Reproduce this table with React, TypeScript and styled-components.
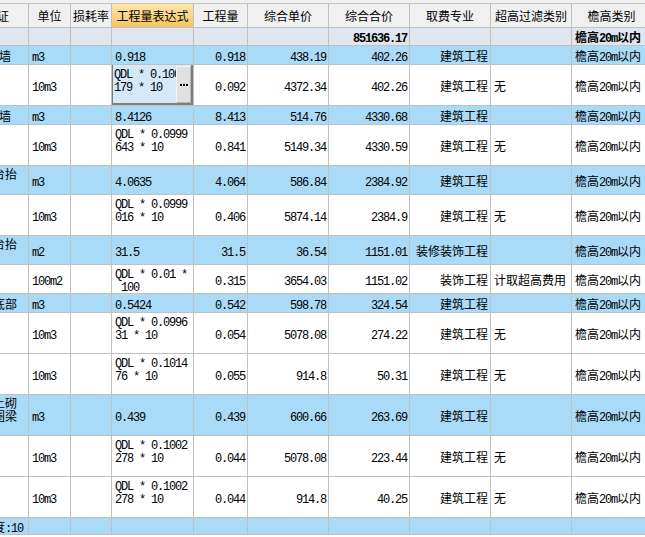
import React from "react";
import styled, { createGlobalStyle, css } from "styled-components";

const GlobalStyle = createGlobalStyle`
  html, body { margin: 0; padding: 0; background: #ffffff; overflow: hidden; }
  #root { width: 645px; height: 537px; overflow: hidden; }
`;

const COLS = "29px 42px 41px 82px 54px 81px 81px 81px 81px 80px";
const LINE = "#c0c0c0";

type Kind = "sum" | "blue" | "white";
const BG: Record<Kind, string> = {
  sum: "#dfe6ef",
  blue: "#a9dbf8",
  white: "#ffffff",
};

const Sheet = styled.div`
  width: 652px;
  font-family: "Noto Sans CJK SC", "Noto Sans", sans-serif;
  font-size: 12px;
  color: #000;
`;

const TopStrip = styled.div`
  height: 3px;
  background: #f0f0f0;
  border-bottom: 1px solid #c4c4c4;
`;

const HeaderRow = styled.div`
  display: grid;
  grid-template-columns: ${COLS};
  height: 24px;
  box-sizing: border-box;
  border-bottom: 1px solid ${LINE};
  background: #f0f0f0;
`;

const HeadCell = styled.div<{ $active?: boolean; $trail?: number }>`
  box-sizing: border-box;
  border-right: 1px solid ${LINE};
  display: flex;
  align-items: center;
  justify-content: ${(p) => (p.$trail !== undefined ? "flex-end" : "center")};
  padding-right: ${(p) => (p.$trail !== undefined ? `${p.$trail}px` : "0")};
  overflow: hidden;
  white-space: nowrap;
  font-size: 12px;
  line-height: 13px;
  ${(p) =>
    p.$active &&
    css`
      background: linear-gradient(#fde7ad, #f6c45f);
    `}
`;

const Row = styled.div<{ $h: number; $kind: Kind }>`
  display: grid;
  grid-template-columns: ${COLS};
  height: ${(p) => p.$h}px;
  box-sizing: border-box;
  border-bottom: 1px solid ${LINE};
  background: ${(p) => BG[p.$kind]};
`;

type Align = "left" | "right";
const Cell = styled.div<{ $align?: Align; $top?: boolean; $trail?: number; $bold?: boolean }>`
  position: relative;
  box-sizing: border-box;
  border-right: 1px solid ${LINE};
  display: flex;
  flex-direction: column;
  justify-content: ${(p) => (p.$top ? "flex-start" : "center")};
  align-items: ${(p) => (p.$align === "right" ? "flex-end" : "flex-start")};
  padding: ${(p) => (p.$top ? "1px" : "0")} ${(p) => (p.$trail !== undefined ? p.$trail : p.$align === "right" ? 2 : 3)}px 0 3px;
  overflow: hidden;
  white-space: pre;
  line-height: 13px;
  font-weight: ${(p) => (p.$bold ? 700 : 400)};
`;

const Line = styled.div`
  display: block;
  height: 13px;
  flex: none;
  white-space: pre;
  line-height: 13px;
`;

const Latin = styled.span`
  font-family: "Liberation Mono", "DejaVu Sans Mono", monospace;
  font-size: 12px;
  letter-spacing: -1.2px;
  white-space: pre;
`;

const Han = styled.span`
  white-space: pre;
`;

const Editor = styled.div`
  position: absolute;
  left: -2px;
  top: -3px;
  right: -1px;
  bottom: -1px;
  border: 3px solid #7d7d7d;
  background: #d5e8f8;
  padding: 1px 0 0 1px;
  box-sizing: border-box;
  overflow: hidden;
  z-index: 2;
`;

const EditText = styled.div`
  width: 62px;
  overflow: hidden;
  white-space: pre;
  line-height: 13px;
`;

const DotsButton = styled.div`
  position: absolute;
  right: 0;
  top: 1px;
  bottom: 0;
  width: 15px;
  box-sizing: border-box;
  background: #e0e0e0;
  border: 1px solid #b4b4b4;
  border-top-color: #f4f4f4;
  border-left-color: #f4f4f4;
  display: flex;
  align-items: center;
  justify-content: center;
  gap: 1px;
`;

const Dot = styled.span`
  width: 2px;
  height: 2px;
  background: #000;
`;

function Mixed({ text }: { text: string }) {
  const parts = text.match(/[\x00-\x7f]+|[^\x00-\x7f]+/g) || [];
  return (
    <>
      {parts.map((p, i) =>
        /^[\x00-\x7f]+$/.test(p) ? <Latin key={i}>{p}</Latin> : <Han key={i}>{p}</Han>
      )}
    </>
  );
}

type RowData = {
  kind: Kind;
  h: number;
  name?: string[];
  nameTrail?: number;
  nameTop?: boolean;
  unit?: string;
  expr?: string[];
  editing?: boolean;
  qty?: string;
  price?: string;
  total?: string;
  fee?: string;
  filter?: string;
  eave?: string;
  bold?: boolean;
};

const EAVE = "檐高20m以内";

const rows: RowData[] = [
  { kind: "sum", h: 18, total: "851636.17", eave: EAVE, bold: true },
  { kind: "blue", h: 19, name: ["墙"], nameTrail: 17, unit: "m3", expr: ["0.918"], qty: "0.918", price: "438.19", total: "402.26", fee: "建筑工程", eave: EAVE },
  { kind: "white", h: 41, unit: "10m3", expr: ["QDL * 0.1002", "179 * 10"], editing: true, qty: "0.092", price: "4372.34", total: "402.26", fee: "建筑工程", filter: "无", eave: EAVE },
  { kind: "blue", h: 19, name: ["墙"], nameTrail: 17, unit: "m3", expr: ["8.4126"], qty: "8.413", price: "514.76", total: "4330.68", fee: "建筑工程", eave: EAVE },
  { kind: "white", h: 41, unit: "10m3", expr: ["QDL * 0.0999", "643 * 10"], qty: "0.841", price: "5149.34", total: "4330.59", fee: "建筑工程", filter: "无", eave: EAVE },
  { kind: "blue", h: 29, name: ["台抬"], nameTrail: 11, nameTop: true, unit: "m3", expr: ["4.0635"], qty: "4.064", price: "586.84", total: "2384.92", fee: "建筑工程", eave: EAVE },
  { kind: "white", h: 41, unit: "10m3", expr: ["QDL * 0.0999", "016 * 10"], qty: "0.406", price: "5874.14", total: "2384.9", fee: "建筑工程", filter: "无", eave: EAVE },
  { kind: "blue", h: 29, name: ["台抬"], nameTrail: 11, nameTop: true, unit: "m2", expr: ["31.5"], qty: "31.5", price: "36.54", total: "1151.01", fee: "装修装饰工程", eave: EAVE },
  { kind: "white", h: 29, unit: "100m2", expr: ["QDL * 0.01 *", " 100"], qty: "0.315", price: "3654.03", total: "1151.02", fee: "装饰工程", filter: "计取超高费用", eave: EAVE },
  { kind: "blue", h: 19, name: ["底部"], nameTrail: 11, unit: "m3", expr: ["0.5424"], qty: "0.542", price: "598.78", total: "324.54", fee: "建筑工程", eave: EAVE },
  { kind: "white", h: 41, unit: "10m3", expr: ["QDL * 0.0996", "31 * 10"], qty: "0.054", price: "5078.08", total: "274.22", fee: "建筑工程", filter: "无", eave: EAVE },
  { kind: "white", h: 41, unit: "10m3", expr: ["QDL * 0.1014", "76 * 10"], qty: "0.055", price: "914.8", total: "50.31", fee: "建筑工程", filter: "无", eave: EAVE },
  { kind: "blue", h: 41, name: ["土砌", "圈梁"], nameTrail: 11, nameTop: true, unit: "m3", expr: ["0.439"], qty: "0.439", price: "600.66", total: "263.69", fee: "建筑工程", eave: EAVE },
  { kind: "white", h: 41, unit: "10m3", expr: ["QDL * 0.1002", "278 * 10"], qty: "0.044", price: "5078.08", total: "223.44", fee: "建筑工程", filter: "无", eave: EAVE },
  { kind: "white", h: 41, unit: "10m3", expr: ["QDL * 0.1002", "278 * 10"], qty: "0.044", price: "914.8", total: "40.25", fee: "建筑工程", filter: "无", eave: EAVE },
  { kind: "blue", h: 17, name: ["度:10"], nameTrail: 5 },
];

const headers = ["单位", "损耗率", "工程量表达式", "工程量", "综合单价", "综合合价", "取费专业", "超高过滤类别", "檐高类别"];

function Lines({ lines }: { lines?: string[] }) {
  return (
    <>
      {(lines || []).map((l, i) => (
        <Line key={i}>
          <Mixed text={l} />
        </Line>
      ))}
    </>
  );
}

export default function App() {
  return (
    <>
      <GlobalStyle />
      <Sheet>
        <TopStrip />
        <HeaderRow>
          <HeadCell $trail={19}>证</HeadCell>
          {headers.map((h) => (
            <HeadCell key={h} $active={h === "工程量表达式"}>
              {h}
            </HeadCell>
          ))}
        </HeaderRow>
        {rows.map((r, i) => {
          const multi = (r.expr?.length || 0) > 1;
          return (
            <Row key={i} $h={r.h} $kind={r.kind}>
              <Cell $align="right" $trail={r.nameTrail ?? 3} $top={r.nameTop}>
                <Lines lines={r.name} />
              </Cell>
              <Cell>
                <Lines lines={r.unit ? [r.unit] : []} />
              </Cell>
              <Cell />
              <Cell $top={multi}>
                {r.editing ? (
                  <Editor>
                    <EditText>
                      <Lines lines={r.expr} />
                    </EditText>
                    <DotsButton aria-label="...">
                      <Dot />
                      <Dot />
                      <Dot />
                    </DotsButton>
                  </Editor>
                ) : (
                  <Lines lines={r.expr} />
                )}
              </Cell>
              <Cell $align="right">
                <Lines lines={r.qty ? [r.qty] : []} />
              </Cell>
              <Cell $align="right">
                <Lines lines={r.price ? [r.price] : []} />
              </Cell>
              <Cell $align="right" $bold={r.bold}>
                <Lines lines={r.total ? [r.total] : []} />
              </Cell>
              <Cell $align="right">
                <Lines lines={r.fee ? [r.fee] : []} />
              </Cell>
              <Cell>
                <Lines lines={r.filter ? [r.filter] : []} />
              </Cell>
              <Cell $bold={r.bold}>
                <Lines lines={r.eave ? [r.eave] : []} />
              </Cell>
            </Row>
          );
        })}
      </Sheet>
    </>
  );
}
